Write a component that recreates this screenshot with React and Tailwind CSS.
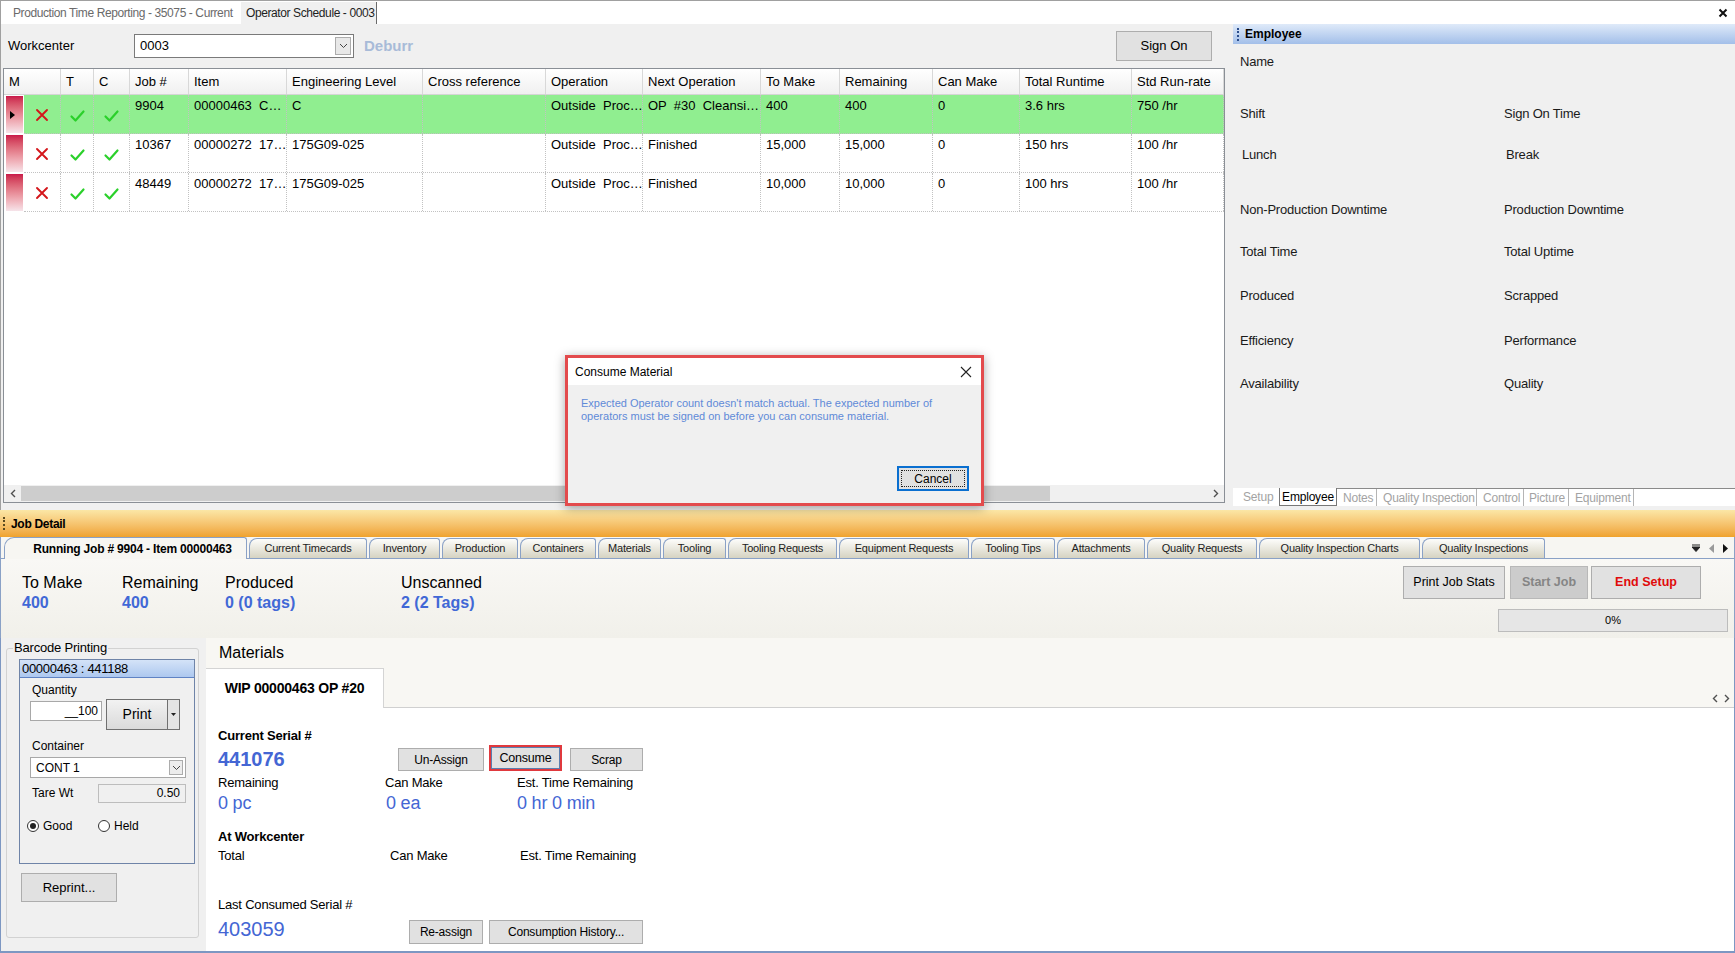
import React from 'react';

const XMark = () => (
  <svg width="16" height="16" viewBox="0 0 16 16" fill="none">
    <path d="M3 3 L13 13 M13 3 L3 13" stroke="#d4161b" strokeWidth="1.9" strokeLinecap="round" />
  </svg>
);

const Check = () => (
  <svg width="17" height="14" viewBox="0 0 17 14" fill="none">
    <path d="M2.5 7.5 L6.5 11.5 L14.5 2.5" stroke="#2ad02a" strokeWidth="2.2" strokeLinecap="round" strokeLinejoin="round" />
  </svg>
);

const Chevron = () => (
  <svg width="9" height="6" viewBox="0 0 9 6" fill="none">
    <path d="M1 1 L4.5 4.5 L8 1" stroke="#444" strokeWidth="1" />
  </svg>
);

const Arrow = ({ dir }) => (
  <svg width="6" height="9" viewBox="0 0 6 9" fill="none">
    <path d={dir === 'left' ? 'M5 1 L1.5 4.5 L5 8' : 'M1 1 L4.5 4.5 L1 8'} stroke="#505050" strokeWidth="1.4" />
  </svg>
);

const columns = [
  { label: 'Job #', key: 'job', w: 'w-[59px]' },
  { label: 'Item', key: 'item', w: 'w-[98px]' },
  { label: 'Engineering Level', key: 'eng', w: 'w-[136px]' },
  { label: 'Cross reference', key: 'cross', w: 'w-[123px]' },
  { label: 'Operation', key: 'op', w: 'w-[97px]' },
  { label: 'Next Operation', key: 'next', w: 'w-[118px]' },
  { label: 'To Make', key: 'toMake', w: 'w-[79px]' },
  { label: 'Remaining', key: 'rem', w: 'w-[93px]' },
  { label: 'Can Make', key: 'can', w: 'w-[87px]' },
  { label: 'Total Runtime', key: 'trt', w: 'w-[112px]' },
  { label: 'Std Run-rate', key: 'std', w: 'w-[92px]' },
];

const rows = [
  { job: '9904', item: '00000463  C…', eng: 'C', cross: '', op: 'Outside  Proc…', next: 'OP  #30  Cleansi…', toMake: '400', rem: '400', can: '0', trt: '3.6 hrs', std: '750 /hr', sel: true },
  { job: '10367', item: '00000272  17…', eng: '175G09-025', cross: '', op: 'Outside  Proc…', next: 'Finished', toMake: '15,000', rem: '15,000', can: '0', trt: '150 hrs', std: '100 /hr' },
  { job: '48449', item: '00000272  17…', eng: '175G09-025', cross: '', op: 'Outside  Proc…', next: 'Finished', toMake: '10,000', rem: '10,000', can: '0', trt: '100 hrs', std: '100 /hr' },
];

const jobTabs = [
  { label: 'Current Timecards', w: 'w-[118px]' },
  { label: 'Inventory', w: 'w-[71px]' },
  { label: 'Production', w: 'w-[76px]' },
  { label: 'Containers', w: 'w-[76px]' },
  { label: 'Materials', w: 'w-[63px]' },
  { label: 'Tooling', w: 'w-[63px]' },
  { label: 'Tooling Requests', w: 'w-[109px]' },
  { label: 'Equipment Requests', w: 'w-[130px]' },
  { label: 'Tooling Tips', w: 'w-[84px]' },
  { label: 'Attachments', w: 'w-[88px]' },
  { label: 'Quality Requests', w: 'w-[110px]' },
  { label: 'Quality Inspection Charts', w: 'w-[161px]' },
  { label: 'Quality Inspections', w: 'w-[123px]' },
];

const employeeRows = [
  { h: 'h-[52px]', left: 'Name', right: '' },
  { h: 'h-[41px]', left: 'Shift', right: 'Sign On Time' },
  { h: 'h-[55px]', left: 'Lunch', right: 'Break', nudge: true },
  { h: 'h-[42px]', left: 'Non-Production Downtime', right: 'Production Downtime' },
  { h: 'h-[44px]', left: 'Total Time', right: 'Total Uptime' },
  { h: 'h-[45px]', left: 'Produced', right: 'Scrapped' },
  { h: 'h-[43px]', left: 'Efficiency', right: 'Performance' },
  { h: 'h-[40px]', left: 'Availability', right: 'Quality' },
];

const btn = 'flex items-center justify-center border border-[#adadad] bg-[#e1e1e1] text-[12px] text-black';

export default function App() {
  return (
    <div className="relative h-[953px] w-[1735px] overflow-hidden bg-[#f0f0f0] font-['Liberation_Sans',Arial,sans-serif] text-[13px] text-black">
      {/* document tabs */}
      <div className="flex h-[24px] items-end border-l border-t border-[#a0a0a0] bg-white">
        <div className="flex h-[22px] w-[240px] items-center pl-[12px] text-[12px] tracking-[-0.4px] text-[#6a6a6a]">
          Production Time Reporting - 35075 - Current
        </div>
        <div className="flex h-[22px] w-[136px] items-center border-r border-[#6a6a6a] bg-[#f0f0f0] pl-[5px] text-[12px] tracking-[-0.4px] text-[#1e1e1e]">
          Operator Schedule - 0003
        </div>
        <div className="ml-auto mr-[7px] self-center">
          <svg width="10" height="10" viewBox="0 0 10 10"><path d="M1.5 1.5 L8.5 8.5 M8.5 1.5 L1.5 8.5" stroke="#111" strokeWidth="2" /></svg>
        </div>
      </div>

      {/* upper section */}
      <div className="flex h-[486px] border-l border-[#a0a0a0]">
        <div className="flex w-[1228px] flex-col pl-[2px]">
          <div className="flex h-[44px] items-center">
            <span className="ml-[5px] w-[126px] text-[13px]">Workcenter</span>
            <div className="flex h-[24px] w-[220px] items-center border border-[#7a7a7a] bg-white pl-[5px] pr-[2px]">
              <span className="flex-1 text-[13px]">0003</span>
              <span className="flex h-[18px] w-[16px] items-center justify-center border border-[#acacac] bg-[#e8e8e8]"><Chevron /></span>
            </div>
            <span className="ml-[10px] text-[15px] font-bold text-[#a8bbd8]">Deburr</span>
            <button className="ml-auto mr-[17px] flex h-[30px] w-[96px] items-center justify-center border border-[#adadad] bg-[#e1e1e1] text-[13px]">Sign On</button>
          </div>

          {/* grid */}
          <div className="flex h-[435px] w-[1222px] flex-col border border-[#8a8f96] bg-white">
            <div className="flex h-[26px] shrink-0 border-b border-[#d5d5d5] bg-gradient-to-b from-white to-[#f0f0f0] text-[13px]">
              <div className="flex w-[57px] items-center border-r border-[#d8d8d8] pl-[5px]">M</div>
              <div className="flex w-[33px] items-center border-r border-[#d8d8d8] pl-[5px]">T</div>
              <div className="flex w-[36px] items-center border-r border-[#d8d8d8] pl-[5px]">C</div>
              {columns.map((c) => (
                <div key={c.key} className={`${c.w} flex shrink-0 items-center border-r border-[#d8d8d8] pl-[5px] whitespace-nowrap`}>{c.label}</div>
              ))}
            </div>
            {rows.map((r) => (
              <div key={r.job} className="flex h-[39px] shrink-0">
                <div className="flex w-[20px] shrink-0 bg-white py-[1px] pl-[2px]">
                  <div className="flex w-[17px] items-center bg-gradient-to-b from-[#c9164a] to-[#f6e4ea] pl-[4px]">
                    {r.sel && <span className="h-0 w-0 border-y-[4px] border-l-[5px] border-y-transparent border-l-black" />}
                  </div>
                </div>
                <div className={`flex flex-1 border-b border-dotted border-[#c2c2c2] ${r.sel ? 'bg-[#90ee90]' : 'bg-white'}`}>
                  <div className="flex w-[37px] shrink-0 items-center justify-center border-r border-dotted border-[#c2c2c2] pt-[2px]"><XMark /></div>
                  <div className="flex w-[33px] shrink-0 items-center justify-center border-r border-dotted border-[#c2c2c2] pt-[4px]"><Check /></div>
                  <div className="flex w-[36px] shrink-0 items-center justify-center border-r border-dotted border-[#c2c2c2] pt-[4px]"><Check /></div>
                  {columns.map((c) => (
                    <div key={c.key} className={`${c.w} shrink-0 overflow-hidden whitespace-pre border-r border-dotted border-[#c2c2c2] pl-[5px] pt-[3px] leading-[16px]`}>{r[c.key]}</div>
                  ))}
                </div>
              </div>
            ))}
            <div className="flex-1" />
            <div className="flex h-[17px] shrink-0 items-center bg-[#f0f0f0]">
              <div className="flex w-[17px] justify-center"><Arrow dir="left" /></div>
              <div className="h-[15px] w-[1029px] bg-[#cdcdcd]" />
              <div className="flex-1" />
              <div className="flex w-[17px] justify-center"><Arrow dir="right" /></div>
            </div>
          </div>
        </div>

        {/* employee panel */}
        <div className="ml-[4px] flex flex-1 flex-col">
          <div className="flex h-[20px] items-center bg-gradient-to-b from-[#dfeaf9] to-[#a3bfe9] pl-[4px]">
            <span className="h-[13px] border-l-2 border-dotted border-[#2b4d8c]" />
            <span className="ml-[6px] text-[12px] font-bold">Employee</span>
          </div>
          <div className="flex h-[444px] flex-col pt-[8px] text-[13px] tracking-[-0.2px] text-[#1a1a1a]">
            {employeeRows.map((r) => (
              <div key={r.left} className={`${r.h} flex`}>
                <span className={`w-[271px] ${r.nudge ? 'pl-[9px]' : 'pl-[7px]'}`}>{r.left}</span>
                <span className={r.nudge ? 'pl-[2px]' : ''}>{r.right}</span>
              </div>
            ))}
          </div>
          <div className="flex h-[18px] items-stretch whitespace-nowrap bg-white pl-[10px] text-[12px] tracking-[-0.2px] text-[#a3a3a3]">
            <span className="flex w-[36px] items-center">Setup</span>
            <span className="flex w-[58px] items-center justify-center border-x border-b border-[#777] text-black">Employee</span>
            <div className="flex flex-1 border-t border-[#8a8a8a]">
              <span className="flex w-[40px] items-center border-r border-[#b5b5b5] pl-[6px]">Notes</span>
              <span className="flex w-[100px] items-center border-r border-[#b5b5b5] pl-[6px]">Quality Inspection</span>
              <span className="flex w-[47px] items-center border-r border-[#b5b5b5] pl-[6px]">Control</span>
              <span className="flex w-[45px] items-center border-r border-[#b5b5b5] pl-[5px]">Picture</span>
              <span className="flex w-[65px] items-center border-r border-[#b5b5b5] pl-[6px]">Equipment</span>
            </div>
          </div>
        </div>
      </div>

      {/* job detail bar */}
      <div className="flex h-[27px] items-center bg-gradient-to-b from-[#fbe7a6] to-[#efa22c] pl-[3px]">
        <span className="h-[13px] border-l-2 border-dotted border-[#5a4a20]" />
        <span className="ml-[6px] text-[12px] font-bold tracking-[-0.3px]">Job Detail</span>
      </div>

      {/* job tabs */}
      <div className="flex h-[22px] items-end border-x border-b border-[#8aa1c6] bg-[#f7f6f2] pl-[3px]">
        <div className="relative z-10 mb-[-1px] flex h-[22px] w-[243px] items-center justify-center rounded-tl-[10px] rounded-tr-[3px] border border-b-0 border-[#8aa1c6] bg-[#f7f6f2] pl-[14px] text-[12px] font-bold tracking-[-0.2px]">
          Running Job # 9904 - Item 00000463
        </div>
        <div className="ml-[2px] flex gap-[2px]">
          {jobTabs.map((t) => (
            <div key={t.label} className={`${t.w} flex h-[20px] items-center justify-center rounded-tl-[8px] rounded-tr-[3px] border border-b-0 border-[#8aa1c6] bg-gradient-to-b from-[#fdfdfb] to-[#d6d3c2] text-[11px] tracking-[-0.2px] text-[#222]`}>
              {t.label}
            </div>
          ))}
        </div>
        <div className="ml-auto mr-[6px] flex h-[20px] items-center gap-[9px]">
          <svg width="8" height="8" viewBox="0 0 8 8"><path d="M0 1 H8 M0 3 H8 L4 7.5 Z" stroke="#222" fill="#222" strokeWidth="1" /></svg>
          <svg width="5" height="9" viewBox="0 0 5 9"><path d="M5 0 L0 4.5 L5 9 Z" fill="#9a9a9a" /></svg>
          <svg width="5" height="9" viewBox="0 0 5 9"><path d="M0 0 L5 4.5 L0 9 Z" fill="#111" /></svg>
        </div>
      </div>

      {/* stats */}
      <div className="flex h-[79px] items-start border-x border-[#8aa1c6] bg-gradient-to-b from-[#f9f8f5] to-[#f1f0ea]">
        <div className="mt-[14px] flex pl-[21px] text-[16px] leading-[19px]">
          <div className="w-[100px]"><div>To Make</div><div className="mt-[1px] font-bold text-[#4168d6]">400</div></div>
          <div className="w-[103px]"><div>Remaining</div><div className="mt-[1px] font-bold text-[#4168d6]">400</div></div>
          <div className="w-[176px]"><div>Produced</div><div className="mt-[1px] font-bold text-[#4168d6]">0 (0 tags)</div></div>
          <div><div>Unscanned</div><div className="mt-[1px] font-bold text-[#4168d6]">2 (2 Tags)</div></div>
        </div>
        <div className="ml-auto mr-[6px] mt-[7px] flex w-[325px] flex-col">
          <div className="flex">
            <button className="flex h-[33px] w-[102px] items-center justify-center border border-[#adadad] bg-[#e1e1e1] text-[12.5px]">Print Job Stats</button>
            <button className="ml-[5px] flex h-[33px] w-[78px] items-center justify-center border border-[#b8b8b8] bg-[#cccccc] text-[12.5px] font-bold text-[#858585]">Start Job</button>
            <button className="ml-[3px] flex h-[33px] w-[110px] items-center justify-center border border-[#adadad] bg-[#e1e1e1] text-[12.5px] font-bold text-[#e00b0b]">End Setup</button>
          </div>
          <div className="ml-auto mt-[10px] flex h-[23px] w-[230px] items-center justify-center border border-[#bcbcbc] bg-[#e6e6e6] text-[11px]">0%</div>
        </div>
      </div>

      {/* bottom section */}
      <div className="flex h-[315px] border-x border-b-2 border-[#7d97c2]">
        <div className="w-[205px] shrink-0 bg-[#f0f0f0] pl-[5px] pt-[2px]">
          <fieldset className="h-[298px] w-[193px] rounded-[3px] border border-[#d2d2d2] pl-[12px]">
            <legend className="ml-[-6px] px-[1px] text-[13px] leading-[16px] tracking-[-0.2px]">Barcode Printing</legend>
            <div className="mt-[3px] h-[205px] w-[176px] border border-[#6f84a8] bg-[#f0f0f0]">
              <div className="flex h-[18px] items-center border-b border-[#5f83c4] bg-gradient-to-b from-[#d4e3f8] to-[#adc8ef] pl-[2px] text-[13px] tracking-[-0.3px]">00000463 : 441188</div>
              <div className="pl-[10px]">
                <div className="ml-[2px] mt-[4px] text-[12px] leading-[16px]">Quantity</div>
                <div className="mt-[1px] flex items-start">
                  <div className="mt-[2px] flex h-[20px] w-[72px] items-center justify-end border border-[#a8a8a8] bg-white pr-[3px] text-[12px]">__100</div>
                  <div className="ml-[4px] flex h-[31px] border border-[#707070]">
                    <div className="flex w-[60px] items-center justify-center bg-gradient-to-b from-[#f2f2f2] to-[#dadada] text-[14px]">Print</div>
                    <div className="flex w-[12px] items-center justify-center border-l border-[#707070] bg-[#e4e4e4]">
                      <svg width="5" height="3" viewBox="0 0 5 3"><path d="M0 0 H5 L2.5 3 Z" fill="#222" /></svg>
                    </div>
                  </div>
                </div>
                <div className="ml-[2px] mt-[8px] text-[12px] leading-[16px]">Container</div>
                <div className="mt-[3px] flex h-[21px] w-[156px] items-center border border-[#a8a8a8] bg-white pl-[5px] pr-[2px]">
                  <span className="flex-1 text-[12px]">CONT 1</span>
                  <span className="flex h-[15px] w-[14px] items-center justify-center border border-[#acacac] bg-[#ececec]"><Chevron /></span>
                </div>
                <div className="mt-[5px] flex h-[20px] items-center">
                  <span className="ml-[2px] w-[66px] text-[12px]">Tare Wt</span>
                  <div className="flex h-[19px] w-[88px] items-center justify-end border border-[#bdbdbd] bg-[#f0f0f0] pr-[5px] text-[12px]">0.50</div>
                </div>
                <div className="mt-[13px] flex h-[20px] items-center text-[12px]">
                  <span className="ml-[-3px] flex h-[12px] w-[12px] items-center justify-center rounded-full border border-[#333] bg-white">
                    <span className="h-[6px] w-[6px] rounded-full bg-[#222]" />
                  </span>
                  <span className="ml-[4px] w-[55px]">Good</span>
                  <span className="h-[12px] w-[12px] rounded-full border border-[#333] bg-white" />
                  <span className="ml-[4px]">Held</span>
                </div>
              </div>
            </div>
            <button className="ml-[2px] mt-[9px] flex h-[29px] w-[96px] items-center justify-center border border-[#adadad] bg-[#e1e1e1] text-[13px]">Reprint...</button>
          </fieldset>
        </div>

        {/* materials */}
        <div className="flex flex-1 flex-col">
          <div className="h-[70px] bg-[#f8f7f3]">
            <div className="pl-[13px] pt-[6px] text-[16px] leading-[18px]">Materials</div>
            <div className="mt-[7px] flex h-[39px] items-end border-b border-[#d0d0d0]">
              <div className="mb-[-1px] flex h-[40px] w-[178px] items-center justify-center border-r border-t border-[#d4d4d4] bg-white text-[14px] font-bold tracking-[-0.2px]">WIP 00000463 OP #20</div>
              <div className="mb-[4px] ml-auto mr-[4px] flex gap-[6px]">
                <Arrow dir="left" />
                <Arrow dir="right" />
              </div>
            </div>
          </div>
          <div className="flex-1 bg-white pl-[12px] pt-[20px] text-[13px] tracking-[-0.2px]">
            <div className="flex items-end">
              <div className="w-[180px]">
                <div className="font-bold leading-[16px]">Current Serial #</div>
                <div className="mt-[3px] text-[20px] font-bold leading-[24px] tracking-normal text-[#4466d4]">441076</div>
              </div>
              <button className={`${btn} h-[23px] w-[86px] text-[12.5px]`}>Un-Assign</button>
              <div className="ml-[5px] flex h-[26px] w-[73px] items-center justify-center border-2 border-[#e0393e]">
                <button className="flex h-[22px] w-[69px] items-center justify-center border border-[#5a7fb0] bg-[#e1e1e1] text-[12.5px]">Consume</button>
              </div>
              <button className={`${btn} ml-[8px] h-[23px] w-[73px] text-[12.5px]`}>Scrap</button>
            </div>
            <div className="mt-[4px] flex">
              <div className="w-[167px]">
                <div className="leading-[16px]">Remaining</div>
                <div className="mt-[1px] text-[18px] leading-[22px] text-[#4466d4]">0 pc</div>
              </div>
              <div className="w-[132px]">
                <div className="leading-[16px]">Can Make</div>
                <div className="mt-[1px] pl-[1px] text-[18px] leading-[22px] text-[#4466d4]">0 ea</div>
              </div>
              <div>
                <div className="leading-[16px]">Est. Time Remaining</div>
                <div className="mt-[1px] text-[18px] leading-[22px] text-[#4466d4]">0 hr 0 min</div>
              </div>
            </div>
            <div className="mt-[15px] font-bold leading-[16px]">At Workcenter</div>
            <div className="mt-[3px] flex leading-[16px]">
              <span className="w-[172px]">Total</span>
              <span className="w-[130px]">Can Make</span>
              <span>Est. Time Remaining</span>
            </div>
            <div className="mt-[33px] leading-[16px]">Last Consumed Serial #</div>
            <div className="mt-[3px] flex items-start">
              <div className="w-[191px] text-[20px] leading-[26px] tracking-normal text-[#4466d4]">403059</div>
              <button className={`${btn} mt-[4px] h-[24px] w-[74px] text-[12.5px]`}>Re-assign</button>
              <button className={`${btn} ml-[6px] mt-[4px] h-[24px] w-[154px] text-[12.5px]`}>Consumption History...</button>
            </div>
          </div>
        </div>
      </div>

      {/* modal dialog */}
      <div className="absolute left-[565px] top-[355px] flex h-[151px] w-[419px] flex-col border-[3px] border-[#e34b4d] bg-[#f0f0f0] shadow-[0_2px_10px_rgba(0,0,0,0.35)]">
        <div className="flex h-[27px] items-center bg-white pl-[7px] pr-[9px]">
          <span className="flex-1 text-[12px]">Consume Material</span>
          <svg width="12" height="12" viewBox="0 0 12 12"><path d="M1 1 L11 11 M11 1 L1 11" stroke="#222" strokeWidth="1.1" /></svg>
        </div>
        <div className="pl-[13px] pt-[12px] text-[11px] leading-[13px] text-[#5f8ad8]">
          <div>Expected Operator count doesn't match actual. The expected number of</div>
          <div>operators must be signed on before you can consume material.</div>
        </div>
        <div className="mb-[12px] mr-[12px] mt-auto flex justify-end">
          <div className="flex h-[25px] w-[72px] items-center justify-center border-2 border-[#0a6fd0] bg-[#e1e1e1] p-[2px]">
            <div className="flex h-full w-full items-center justify-center border border-dotted border-[#222] text-[12px]">Cancel</div>
          </div>
        </div>
      </div>
    </div>
  );
}
